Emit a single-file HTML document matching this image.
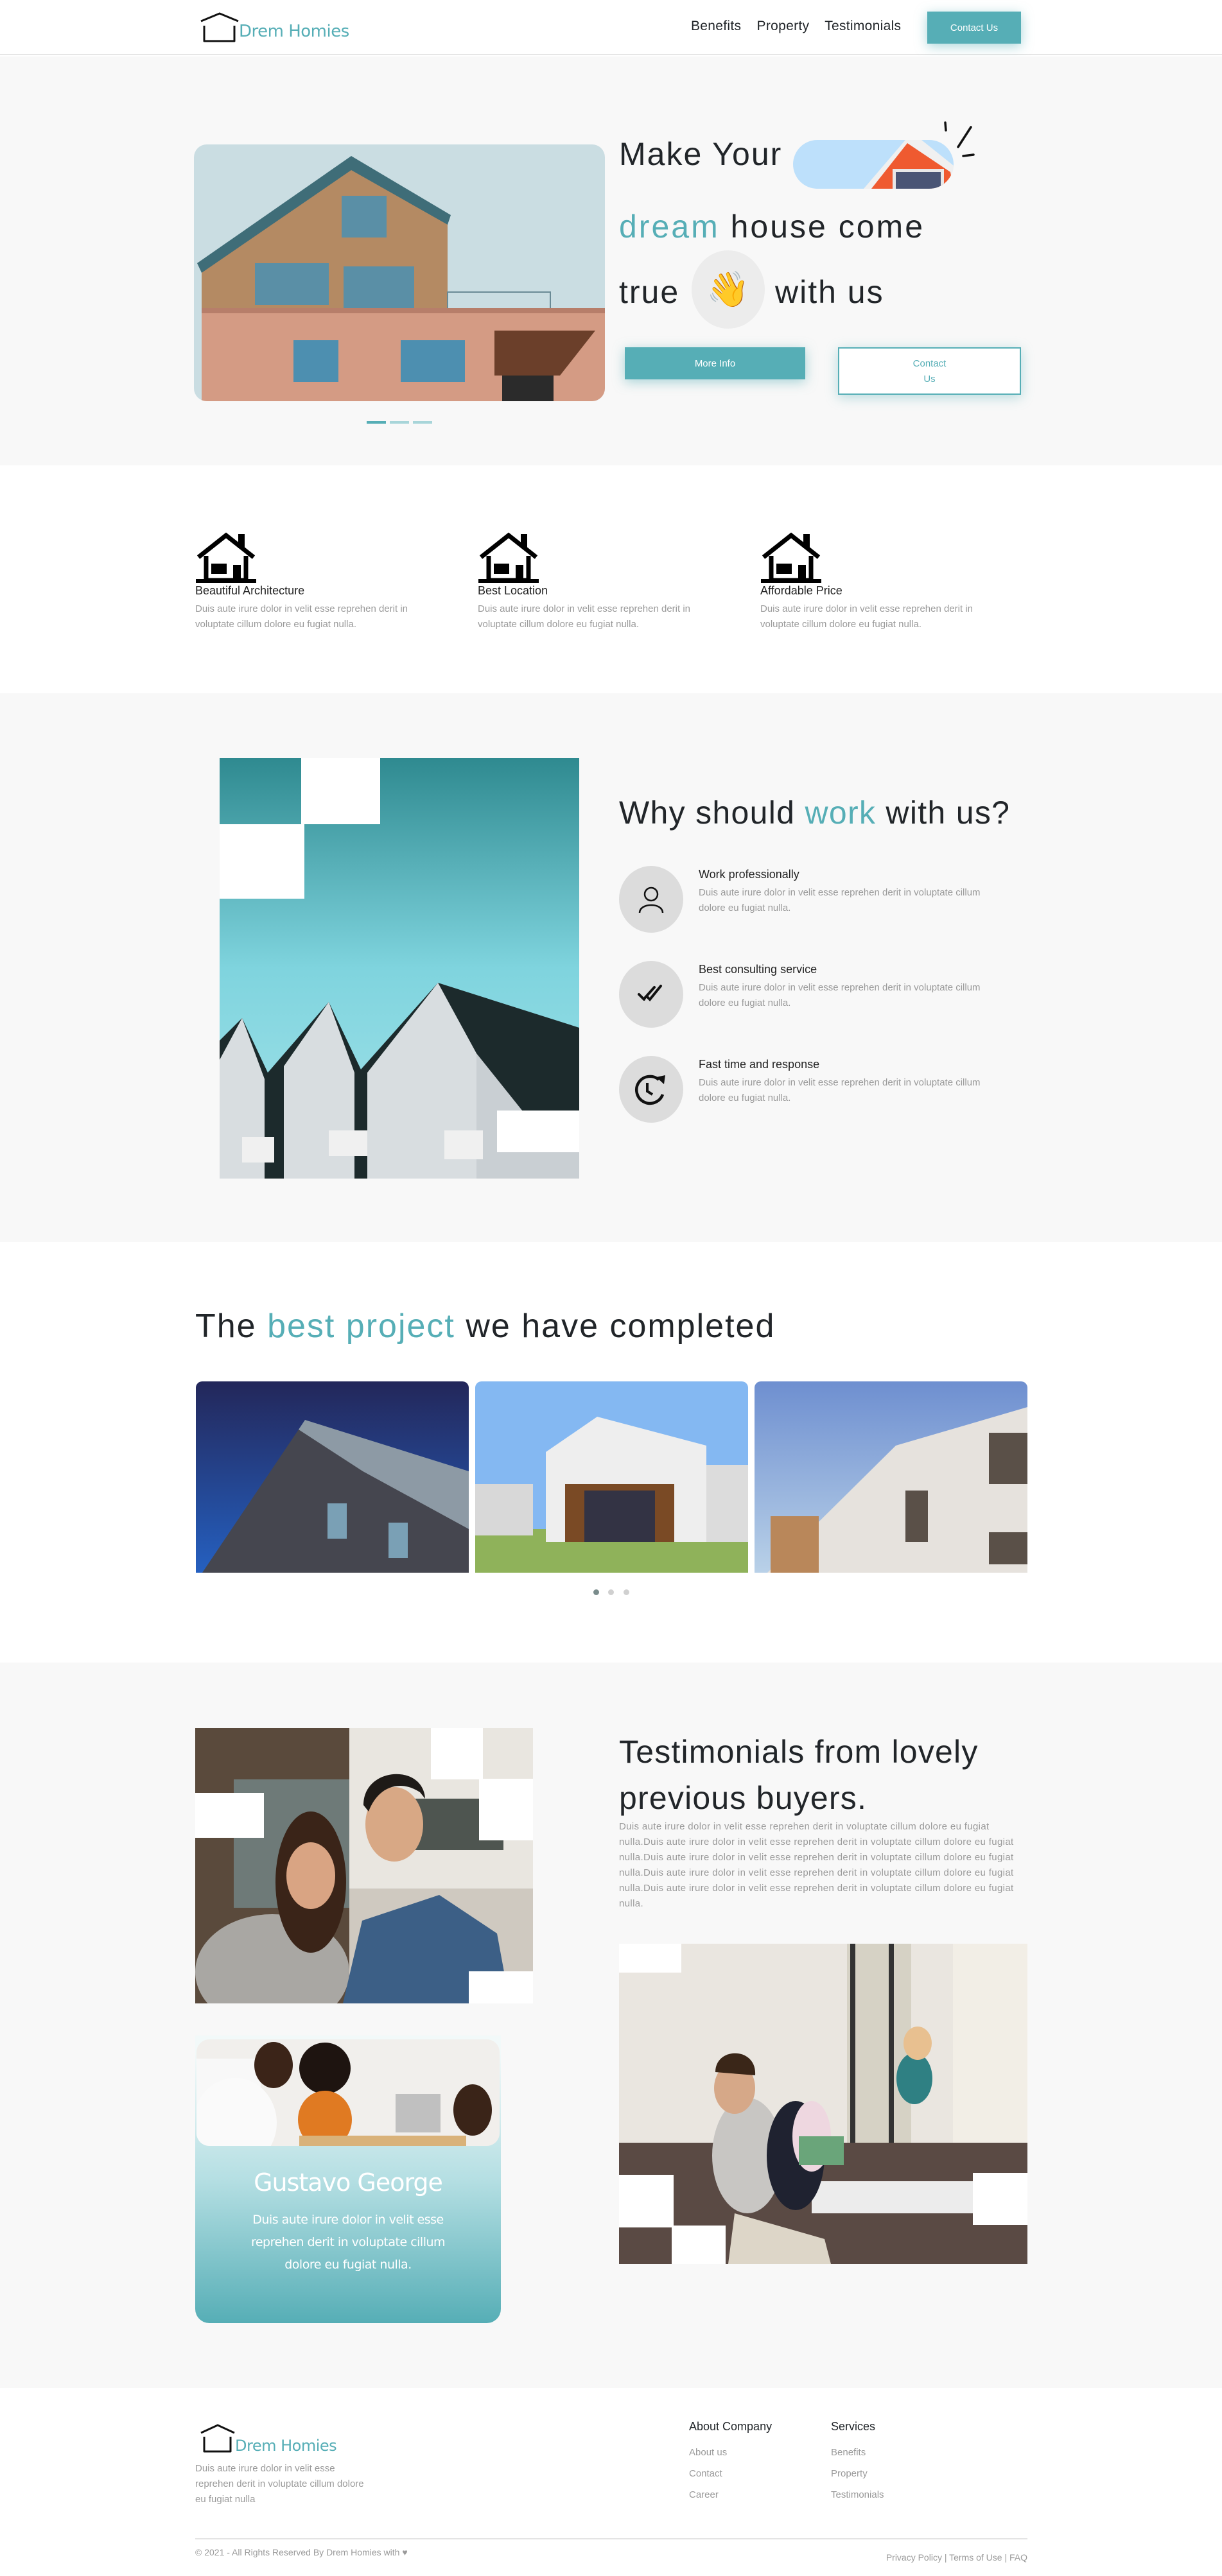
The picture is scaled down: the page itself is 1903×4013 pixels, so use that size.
<!DOCTYPE html>
<html><head><meta charset="utf-8">
<style>
*{margin:0;padding:0;box-sizing:border-box}
body{width:1903px;height:4013px;position:relative;font-family:"Liberation Sans",sans-serif;color:#212529;background:#fff;overflow:hidden}
.a{position:absolute}
.teal{color:#56aeb6}
.g{color:#9a9a9a}
.sec{position:absolute;left:0;width:1903px}
.btn{background:#56aeb6;color:#fff;display:flex;align-items:center;justify-content:center;box-shadow:0 4px 18px rgba(86,174,182,.5)}
.ft{font-size:18px;color:#222}
.fd{font-size:15px;line-height:24px;color:#9a9a9a}
.circ{width:100px;height:104px;border-radius:50%;background:#dcdcdc;display:flex;align-items:center;justify-content:center}
.w{background:#fff;position:absolute}
</style></head><body>

<!-- NAV -->
<div class="sec" style="top:0;height:86px;background:#fff;border-bottom:2px solid #e6e6e6"></div>
<svg class="a" style="left:310px;top:18px" width="64" height="50" viewBox="0 0 64 50"><path d="M3 15 L32 3 L61 15" fill="none" stroke="#111" stroke-width="3"/><path d="M8 22 V46 H55 V22" fill="none" stroke="#111" stroke-width="3" stroke-linejoin="round"/></svg>
<div class="a teal" style="left:372px;top:34px;font-size:26px;font-family:'DejaVu Sans',sans-serif;letter-spacing:-.5px">Drem Homies</div>
<div class="a" style="left:1076px;top:29px;font-size:21px;word-spacing:6px;letter-spacing:.3px">Benefits&nbsp; Property&nbsp; Testimonials</div>
<div class="a btn" style="left:1444px;top:18px;width:146px;height:50px;font-size:15px">Contact Us</div>

<!-- HERO -->
<div class="sec" style="top:88px;height:637px;background:#f8f8f8"></div>
<svg class="a" style="left:302px;top:225px;border-radius:20px" width="640" height="400" viewBox="0 0 640 400">
<rect width="640" height="400" fill="#cadde2"/>
<polygon points="12,340 12,190 245,25 395,115 395,340" fill="#b48a63"/>
<polygon points="5,185 245,18 400,110 395,125 245,40 12,200" fill="#3f6d78"/>
<rect x="230" y="80" width="70" height="65" fill="#5a8fa6"/>
<rect x="95" y="185" width="115" height="65" fill="#5a8fa6"/>
<rect x="233" y="190" width="110" height="65" fill="#5a8fa6"/>
<rect x="395" y="230" width="160" height="30" fill="none" stroke="#6a8a95" stroke-width="2"/>
<rect x="12" y="255" width="630" height="145" fill="#d49b84"/>
<rect x="12" y="255" width="630" height="8" fill="#b77e6a"/>
<rect x="155" y="305" width="70" height="65" fill="#4d8fb0"/>
<rect x="322" y="305" width="100" height="65" fill="#4d8fb0"/>
<polygon points="468,290 625,290 570,360 468,360" fill="#6b3f2a"/>
<rect x="480" y="360" width="80" height="40" fill="#2b2b2b"/>
</svg>
<div class="a" style="left:964px;top:210px;font-size:50px;line-height:60px;letter-spacing:2px">Make Your</div>
<svg class="a" style="left:1235px;top:218px" width="250" height="76" viewBox="0 0 250 76"><defs><clipPath id="pc"><rect width="250" height="76" rx="38"/></clipPath></defs><g clip-path="url(#pc)"><rect width="250" height="76" fill="#bde0fb"/><polygon points="110,76 175,0 200,0 250,40 250,76" fill="#f0f0f0"/><polygon points="122,76 178,5 245,50 250,76" fill="#ef5a30"/><rect x="155" y="45" width="80" height="31" fill="#e8e8e8"/><rect x="160" y="50" width="70" height="26" fill="#4a5575"/></g></svg>
<svg class="a" style="left:1470px;top:185px" width="70" height="70" viewBox="0 0 70 70"><path d="M2 6 L3 18 M42 13 L22 44 M30 58 L46 56" stroke="#111" stroke-width="3.5" stroke-linecap="round"/></svg>
<div class="a" style="left:964px;top:323px;font-size:50px;line-height:60px;letter-spacing:3px"><span class="teal">dream</span> house come</div>
<div class="a" style="left:964px;top:425px;font-size:50px;line-height:60px;letter-spacing:2px">true</div>
<div class="a" style="left:1077px;top:390px;width:114px;height:122px;border-radius:50%;background:#ececec;display:flex;align-items:center;justify-content:center;font-size:54px;font-family:'Noto Color Emoji','DejaVu Sans',sans-serif;color:#f5c23b">👋</div>
<div class="a" style="left:1207px;top:425px;font-size:50px;line-height:60px;letter-spacing:2px">with us</div>
<div class="a btn" style="left:973px;top:541px;width:281px;height:50px;font-size:15px">More Info</div>
<div class="a" style="left:1305px;top:541px;width:285px;height:74px;background:#fff;border:2px solid #56aeb6;color:#56aeb6;font-size:15px;line-height:24px;text-align:center;padding-top:12px;box-shadow:0 4px 18px rgba(86,174,182,.4)">Contact<br>Us</div>
<div class="a" style="left:571px;top:656px;width:30px;height:4px;background:#56aeb6"></div>
<div class="a" style="left:607px;top:656px;width:30px;height:4px;background:#a8d5d9"></div>
<div class="a" style="left:643px;top:656px;width:30px;height:4px;background:#a8d5d9"></div>

<!-- FEATURES -->
<svg width="0" height="0" style="position:absolute"><defs><g id="house"><path d="M4 40 L47 6 L90 40" fill="none" stroke="#000" stroke-width="7"/><rect x="66" y="4" width="10" height="22" fill="#000"/><path d="M16 38 V76 H78 V38" fill="none" stroke="#000" stroke-width="7"/><rect x="0" y="74" width="94" height="6" fill="#000"/><rect x="24" y="50" width="24" height="16" fill="#000"/><rect x="58" y="52" width="12" height="26" fill="#000"/></g></defs></svg>
<svg class="a" style="left:305px;top:828px" width="95" height="82"><use href="#house"/></svg>
<svg class="a" style="left:745px;top:828px" width="95" height="82"><use href="#house"/></svg>
<svg class="a" style="left:1185px;top:828px" width="95" height="82"><use href="#house"/></svg>
<div class="a ft" style="left:304px;top:910px">Beautiful Architecture</div>
<div class="a fd" style="left:304px;top:937px;width:395px">Duis aute irure dolor in velit esse reprehen derit in voluptate cillum dolore eu fugiat nulla.</div>
<div class="a ft" style="left:744px;top:910px">Best Location</div>
<div class="a fd" style="left:744px;top:937px;width:395px">Duis aute irure dolor in velit esse reprehen derit in voluptate cillum dolore eu fugiat nulla.</div>
<div class="a ft" style="left:1184px;top:910px">Affordable Price</div>
<div class="a fd" style="left:1184px;top:937px;width:395px">Duis aute irure dolor in velit esse reprehen derit in voluptate cillum dolore eu fugiat nulla.</div>

<!-- WHY -->
<div class="sec" style="top:1080px;height:855px;background:#f8f8f8"></div>
<svg class="a" style="left:342px;top:1181px" width="560" height="655" viewBox="0 0 560 655">
<defs><linearGradient id="sky" x1="0" y1="0" x2="0" y2="1"><stop offset="0" stop-color="#2f8a90"/><stop offset=".5" stop-color="#7fd4de"/><stop offset="1" stop-color="#a5e3ea"/></linearGradient></defs>
<rect width="560" height="655" fill="url(#sky)"/>
<polygon points="0,440 35,405 75,490 170,380 220,485 340,350 560,420 560,655 0,655" fill="#1c2a2c"/>
<polygon points="0,470 35,405 70,500 70,655 0,655" fill="#d8dde0"/>
<polygon points="100,480 170,380 210,490 210,655 100,655" fill="#d8dde0"/>
<polygon points="230,490 340,350 400,460 400,655 230,655" fill="#d8dde0"/>
<polygon points="400,460 480,560 560,570 560,655 400,655" fill="#c9cfd3"/>
<rect x="35" y="590" width="50" height="40" fill="#f0f0f0"/><rect x="170" y="580" width="60" height="40" fill="#f0f0f0"/><rect x="350" y="580" width="60" height="45" fill="#f0f0f0"/>
</svg>
<div class="w" style="left:469px;top:1181px;width:123px;height:103px"></div>
<div class="w" style="left:342px;top:1284px;width:132px;height:116px"></div>
<div class="w" style="left:774px;top:1730px;width:128px;height:65px"></div>
<div class="a" style="left:964px;top:1236px;font-size:50px;line-height:60px;letter-spacing:1.3px">Why should <span class="teal">work</span> with us?</div>
<div class="a circ" style="left:964px;top:1349px"><svg width="50" height="50" viewBox="0 0 50 50"><circle cx="25" cy="17" r="10" fill="none" stroke="#111" stroke-width="2.5"/><path d="M7 46 C7 30 43 30 43 46" fill="none" stroke="#111" stroke-width="2.5"/></svg></div>
<div class="a circ" style="left:964px;top:1497px"><svg width="50" height="50" viewBox="0 0 50 50"><path d="M6 25 L14 33 M14 32 L30 14 M18 28 L23 33 L40 12" fill="none" stroke="#111" stroke-width="4" stroke-linecap="round"/></svg></div>
<div class="a circ" style="left:964px;top:1645px"><svg width="64" height="64" viewBox="0 0 64 64"><path d="M50 40 A21 21 0 1 1 44 17" fill="none" stroke="#111" stroke-width="4.5"/><path d="M26 22 V35 L34 40" fill="none" stroke="#111" stroke-width="4"/><polygon points="40,13 54,10 52,24" fill="#111"/></svg></div>
<div class="a ft" style="left:1088px;top:1352px">Work professionally</div>
<div class="a fd" style="left:1088px;top:1379px;width:475px">Duis aute irure dolor in velit esse reprehen derit in voluptate cillum dolore eu fugiat nulla.</div>
<div class="a ft" style="left:1088px;top:1500px">Best consulting service</div>
<div class="a fd" style="left:1088px;top:1527px;width:475px">Duis aute irure dolor in velit esse reprehen derit in voluptate cillum dolore eu fugiat nulla.</div>
<div class="a ft" style="left:1088px;top:1648px">Fast time and response</div>
<div class="a fd" style="left:1088px;top:1675px;width:475px">Duis aute irure dolor in velit esse reprehen derit in voluptate cillum dolore eu fugiat nulla.</div>

<!-- PROJECTS -->
<div class="a" style="left:304px;top:2036px;font-size:52px;line-height:60px;letter-spacing:2px">The <span class="teal">best project</span> we have completed</div>
<svg class="a" style="left:305px;top:2152px;border-radius:10px 10px 0 0" width="425" height="298" viewBox="0 0 425 298">
<defs><linearGradient id="b1" x1="0" y1="0" x2="0" y2="1"><stop offset="0" stop-color="#23275a"/><stop offset="1" stop-color="#2560c0"/></linearGradient></defs>
<rect width="425" height="298" fill="url(#b1)"/><polygon points="10,298 160,75 425,230 425,298" fill="#45464f"/><polygon points="160,75 260,140 425,230 425,140 170,60" fill="#8d9aa5"/>
<rect x="205" y="190" width="30" height="55" fill="#7aa0b5"/><rect x="300" y="220" width="30" height="55" fill="#7aa0b5"/></svg>
<svg class="a" style="left:740px;top:2152px;border-radius:10px 10px 0 0" width="425" height="298" viewBox="0 0 425 298">
<rect width="425" height="298" fill="#84b8f2"/><rect x="0" y="230" width="425" height="68" fill="#8fb25a"/>
<polygon points="110,110 190,55 360,100 360,250 110,250" fill="#eeeeee"/><rect x="140" y="160" width="170" height="90" fill="#7a4a25"/><rect x="170" y="170" width="110" height="80" fill="#334"/><rect x="360" y="130" width="65" height="120" fill="#dcdcdc"/><rect x="0" y="160" width="90" height="80" fill="#d8d8d8"/></svg>
<svg class="a" style="left:1175px;top:2152px;border-radius:10px 10px 0 0" width="425" height="298" viewBox="0 0 425 298">
<defs><linearGradient id="b3" x1="0" y1="0" x2="0" y2="1"><stop offset="0" stop-color="#6e8fd0"/><stop offset="1" stop-color="#b9d1e8"/></linearGradient></defs>
<rect width="425" height="298" fill="url(#b3)"/><polygon points="20,298 220,100 425,40 425,298" fill="#e6e2dd"/><rect x="25" y="210" width="75" height="88" fill="#b9875a"/><rect x="365" y="80" width="60" height="80" fill="#5a5048"/><rect x="235" y="170" width="35" height="80" fill="#5a5048"/><rect x="365" y="235" width="60" height="50" fill="#5a5048"/></svg>
<div class="a" style="left:924px;top:2476px;width:9px;height:9px;border-radius:50%;background:#7a8c8c"></div>
<div class="a" style="left:947px;top:2476px;width:9px;height:9px;border-radius:50%;background:#d0d0d0"></div>
<div class="a" style="left:971px;top:2476px;width:9px;height:9px;border-radius:50%;background:#d0d0d0"></div>

<!-- TESTIMONIALS -->
<div class="sec" style="top:2590px;height:1130px;background:#f8f8f8"></div>
<svg class="a" style="left:304px;top:2692px" width="526" height="429" viewBox="0 0 526 429">
<rect width="526" height="429" fill="#cfc9c0"/><rect x="0" y="0" width="240" height="429" fill="#5a4a3c"/><rect x="60" y="80" width="180" height="200" fill="#6e7a78"/><rect x="240" y="0" width="286" height="250" fill="#e9e6e0"/><rect x="330" y="110" width="150" height="80" fill="#4e5550"/>
<ellipse cx="120" cy="380" rx="120" ry="90" fill="#a9a7a3"/><ellipse cx="180" cy="240" rx="55" ry="110" fill="#3a2418"/><ellipse cx="180" cy="230" rx="38" ry="52" fill="#d9a483"/>
<path d="M230 429 L260 300 L380 260 L470 320 L490 429 Z" fill="#3c5f86"/><ellipse cx="310" cy="150" rx="45" ry="58" fill="#d8a885"/><path d="M262 120 C262 60 355 55 358 110 L350 100 C320 80 285 90 270 130 Z" fill="#1e1a17"/></svg>
<div class="w" style="left:671px;top:2692px;width:81px;height:80px"></div>
<div class="w" style="left:746px;top:2771px;width:84px;height:96px"></div>
<div class="w" style="left:304px;top:2793px;width:107px;height:70px"></div>
<div class="w" style="left:730px;top:3071px;width:100px;height:50px"></div>

<div class="a" style="left:304px;top:3171px;width:476px;height:448px;border-radius:0 0 22px 22px;background:linear-gradient(#f2f9f9 0,#f2f9f9 28px,#b5dfe3 50%,#56aeb6 100%);overflow:hidden">
<svg class="a" style="left:2px;top:6px;border-radius:20px" width="472" height="166" viewBox="0 0 472 166"><rect width="472" height="166" fill="#f1efec"/><rect x="0" y="30" width="100" height="136" fill="#f8f8f8"/><ellipse cx="60" cy="130" rx="65" ry="70" fill="#fafafa"/><ellipse cx="120" cy="40" rx="30" ry="36" fill="#3b2418"/><ellipse cx="200" cy="45" rx="40" ry="40" fill="#1e1410"/><ellipse cx="200" cy="125" rx="42" ry="45" fill="#e07a22"/><rect x="310" y="85" width="70" height="60" fill="#c0c0c0"/><ellipse cx="430" cy="110" rx="30" ry="40" fill="#3a2418"/><rect x="160" y="150" width="260" height="16" fill="#d9b27a"/></svg>
<div class="a" style="left:0;top:207px;width:476px;text-align:center;color:#fff;font-size:38px;font-family:'DejaVu Sans',sans-serif;letter-spacing:-1px">Gustavo George</div>
<div class="a" style="left:60px;top:270px;width:356px;text-align:center;color:#fff;font-size:19px;line-height:35px;font-family:'DejaVu Sans',sans-serif;letter-spacing:-.5px">Duis aute irure dolor in velit esse reprehen derit in voluptate cillum dolore eu fugiat nulla.</div>
</div>

<div class="a" style="left:964px;top:2693px;font-size:50px;line-height:72px;width:660px;letter-spacing:1.2px">Testimonials from lovely previous buyers.</div>
<div class="a fd" style="left:964px;top:2834px;width:636px;letter-spacing:.35px">Duis aute irure dolor in velit esse reprehen derit in voluptate cillum dolore eu fugiat nulla.Duis aute irure dolor in velit esse reprehen derit in voluptate cillum dolore eu fugiat nulla.Duis aute irure dolor in velit esse reprehen derit in voluptate cillum dolore eu fugiat nulla.Duis aute irure dolor in velit esse reprehen derit in voluptate cillum dolore eu fugiat nulla.Duis aute irure dolor in velit esse reprehen derit in voluptate cillum dolore eu fugiat nulla.</div>
<svg class="a" style="left:964px;top:3028px" width="636" height="499" viewBox="0 0 636 499">
<rect width="636" height="499" fill="#eae6e0"/><rect x="355" y="0" width="100" height="320" fill="#d6d2c5"/><rect x="360" y="0" width="8" height="320" fill="#333"/><rect x="420" y="0" width="8" height="320" fill="#333"/><rect x="520" y="0" width="116" height="320" fill="#f2eee6"/>
<rect x="0" y="310" width="636" height="189" fill="#5a4a44"/><rect x="300" y="370" width="336" height="50" fill="#ececec"/>
<ellipse cx="200" cy="330" rx="55" ry="90" fill="#c8c6c3"/><ellipse cx="180" cy="225" rx="32" ry="40" fill="#d6a888"/><path d="M150 200 C150 160 215 160 212 205 Z" fill="#3a2618"/>
<ellipse cx="275" cy="330" rx="45" ry="85" fill="#1f2230"/><ellipse cx="300" cy="300" rx="30" ry="55" fill="#eed7e0"/><rect x="280" y="300" width="70" height="45" fill="#6aa57a"/>
<ellipse cx="460" cy="210" rx="28" ry="40" fill="#2f8083"/><ellipse cx="465" cy="155" rx="22" ry="26" fill="#e8c090"/><path d="M180 420 L320 460 L330 499 L170 499 Z" fill="#ddd6c8"/></svg>
<div class="w" style="left:964px;top:3028px;width:97px;height:45px"></div>
<div class="w" style="left:964px;top:3388px;width:85px;height:82px"></div>
<div class="w" style="left:1046px;top:3467px;width:84px;height:60px"></div>
<div class="w" style="left:1515px;top:3385px;width:85px;height:81px"></div>

<!-- FOOTER -->
<svg class="a" style="left:310px;top:3776px" width="58" height="46" viewBox="0 0 58 46"><path d="M3 14 L29 2 L55 14" fill="none" stroke="#111" stroke-width="3"/><path d="M8 20 V43 H49 V20" fill="none" stroke="#111" stroke-width="3" stroke-linejoin="round"/></svg>
<div class="a teal" style="left:366px;top:3796px;font-size:24px;font-family:'DejaVu Sans',sans-serif;letter-spacing:-.5px">Drem Homies</div>
<div class="a fd" style="left:304px;top:3834px;width:280px">Duis aute irure dolor in velit esse reprehen derit in voluptate cillum dolore eu fugiat nulla</div>
<div class="a" style="left:1073px;top:3770px;font-size:18px">About Company</div>
<div class="a" style="left:1294px;top:3770px;font-size:18px">Services</div>
<div class="a g" style="left:1073px;top:3804px;font-size:15px;line-height:33px">About us<br>Contact<br>Career</div>
<div class="a g" style="left:1294px;top:3804px;font-size:15px;line-height:33px">Benefits<br>Property<br>Testimonials</div>
<div class="a" style="left:304px;top:3954px;width:1296px;height:2px;background:#e4e4e4"></div>
<div class="a g" style="left:304px;top:3968px;font-size:14px">© 2021 - All Rights Reserved By Drem Homies with ♥</div>
<div class="a g" style="left:1300px;top:3976px;width:300px;text-align:right;font-size:14px">Privacy Policy | Terms of Use | FAQ</div>
</body></html>
